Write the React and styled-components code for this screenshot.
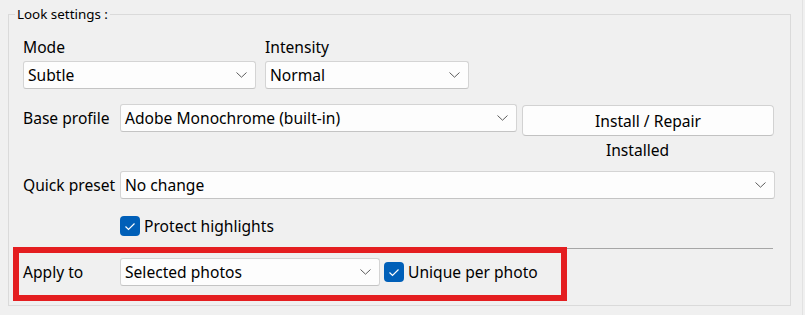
import React from 'react';
import styled, { createGlobalStyle } from 'styled-components';

const GlobalStyle = createGlobalStyle`
  html, body {
    margin: 0;
    padding: 0;
    background: #f0f0f0;
  }
  body {
    font-family: "Noto Sans", "Liberation Sans", sans-serif;
    color: #000;
  }
`;

// Page frame, the faint line at the right is the parent panel edge
const Panel = styled.div`
  width: 803px;
  height: 315px;
  border-right: 1px solid #e2e2e2;
  box-sizing: border-box;
  padding-top: 6px;
`;

const Group = styled.fieldset`
  margin: 0 0 0 8px;
  padding: 0;
  width: 783px;
  height: 300px;
  box-sizing: border-box;
  border: 1px solid #dadada;
`;

const Legend = styled.legend`
  margin-left: 6px;
  padding: 0 2px;
  font-size: 13.4px;
  line-height: 16px;
  color: #000;
`;

const Content = styled.div`
  padding: 15px 0 0 14px;
  display: flex;
  flex-direction: column;
`;

const TopRow = styled.div`
  display: flex;
  gap: 9px;
`;

const Field = styled.div`
  display: flex;
  flex-direction: column;
  gap: 4px;
  width: ${(p) => p.$width}px;
`;

const Label = styled.div`
  font-size: 15.6px;
  line-height: ${(p) => p.$lh || 20}px;
  width: ${(p) => (p.$width ? `${p.$width}px` : 'auto')};
  flex-shrink: 0;
  white-space: nowrap;
`;

const Row = styled.div`
  display: flex;
  align-items: ${(p) => p.$align || 'flex-start'};
  margin-top: ${(p) => p.$mt || 0}px;
`;

const ComboBox = styled.div`
  display: flex;
  align-items: center;
  justify-content: space-between;
  box-sizing: border-box;
  width: ${(p) => p.$width}px;
  height: 28px;
  padding: 0 8px 0 4px;
  background: #fdfdfd;
  border: 1px solid #d4d4d4;
  border-bottom-color: #c4c4c4;
  border-radius: 3px;
  font-size: 15.6px;
  flex-shrink: 0;
  white-space: nowrap;
`;

const ButtonColumn = styled.div`
  display: flex;
  flex-direction: column;
  margin-left: 5px;
  width: 252px;
`;

const Button = styled.div`
  margin-top: 1px;
  height: 31px;
  box-sizing: border-box;
  display: flex;
  align-items: center;
  justify-content: center;
  background: #fdfdfd;
  border: 1px solid #d2d2d2;
  border-bottom-color: #c2c2c2;
  border-radius: 4px;
  font-size: 15.6px;
`;

const Status = styled.div`
  margin-top: 4px;
  margin-right: 21px;
  text-align: center;
  font-size: 15.6px;
  line-height: 20px;
`;

const CheckRow = styled.label`
  display: flex;
  align-items: center;
  gap: 4px;
  font-size: 15.6px;
  line-height: 20px;
  white-space: nowrap;
  margin-left: ${(p) => p.$ml || 0}px;
`;

const Box = styled.span`
  width: 20px;
  height: 20px;
  border-radius: 4px;
  background: #005fb8;
  display: inline-flex;
  align-items: center;
  justify-content: center;
  flex-shrink: 0;
`;

const Separator = styled.div`
  margin-top: 12px;
  width: 750px;
  height: 1px;
  background: #a6a6a6;
`;

// The red annotation frame around the "Apply to" row
const HighlightRow = styled.div`
  margin-top: 8px;
  width: 534px;
  height: 34px;
  box-sizing: border-box;
  padding-bottom: 4px;
  display: flex;
  align-items: center;
  outline: 6px solid #e41e20;
  outline-offset: 4px;
`;

const Chevron = () => (
  <svg width="11" height="6" viewBox="0 0 11 6">
    <polyline points="0.5,0.5 5.5,5.2 10.5,0.5" fill="none" stroke="#5c5c5c" strokeWidth="1" />
  </svg>
);

const Check = () => (
  <svg width="20" height="20" viewBox="0 0 20 20">
    <polyline points="5.5,10.5 8.5,13.5 14.5,7.5" fill="none" stroke="#fff" strokeWidth="1.2" />
  </svg>
);

function Combo({ width, value }) {
  return (
    <ComboBox $width={width}>
      <span>{value}</span>
      <Chevron />
    </ComboBox>
  );
}

function Checkbox({ label, ml }) {
  return (
    <CheckRow $ml={ml}>
      <Box><Check /></Box>
      {label}
    </CheckRow>
  );
}

export default function App() {
  return (
    <>
      <GlobalStyle />
      <Panel>
        <Group>
          <Legend>Look settings :</Legend>
          <Content>
            <TopRow>
              <Field $width={233}>
                <Label>Mode</Label>
                <Combo width={233} value="Subtle" />
              </Field>
              <Field $width={204}>
                <Label>Intensity</Label>
                <Combo width={204} value="Normal" />
              </Field>
            </TopRow>

            <Row $mt={15}>
              <Label $width={97} $lh={28}>Base profile</Label>
              <Combo width={397} value="Adobe Monochrome (built-in)" />
              <ButtonColumn>
                <Button>Install / Repair</Button>
                <Status>Installed</Status>
              </ButtonColumn>
            </Row>

            <Row $mt={11}>
              <Label $width={97} $lh={28}>Quick preset</Label>
              <Combo width={655} value="No change" />
            </Row>

            <Row $mt={17}>
              <Checkbox ml={97} label="Protect highlights" />
            </Row>

            <Separator />

            <HighlightRow>
              <Label $width={97}>Apply to</Label>
              <Combo width={260} value="Selected photos" />
              <Checkbox ml={4} label="Unique per photo" />
            </HighlightRow>
          </Content>
        </Group>
      </Panel>
    </>
  );
}
